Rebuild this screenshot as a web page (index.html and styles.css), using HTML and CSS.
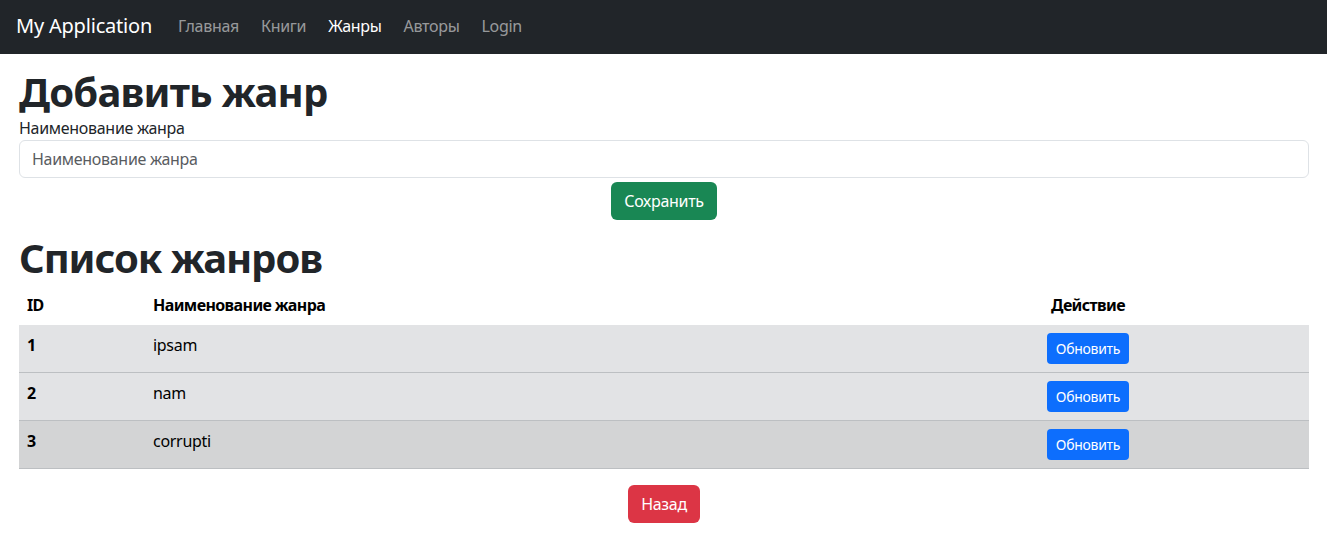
FILE: index.html
```html
<!DOCTYPE html>
<html lang="ru">
<head>
<meta charset="utf-8">
<title>My Application</title>
<link rel="stylesheet" href="styles.css">
</head>
<body>
<nav class="navbar">
  <a class="brand" href="#">My Application</a>
  <ul class="nav">
    <li><a class="nav-link" href="#">Главная</a></li>
    <li><a class="nav-link" href="#">Книги</a></li>
    <li><a class="nav-link active" href="#">Жанры</a></li>
    <li><a class="nav-link" href="#">Авторы</a></li>
    <li><a class="nav-link" href="#">Login</a></li>
  </ul>
</nav>
<main class="content">
  <h1 class="title">Добавить жанр</h1>
  <form class="form">
    <label class="label" for="name">Наименование жанра</label>
    <input class="input" id="name" type="text" placeholder="Наименование жанра">
    <div class="center">
      <button type="button" class="btn btn-success">Сохранить</button>
    </div>
  </form>
  <h1 class="title title-list">Список жанров</h1>
  <table class="table">
    <thead>
      <tr>
        <th class="col-id">ID</th>
        <th class="col-name">Наименование жанра</th>
        <th class="col-action">Действие</th>
        <th></th>
      </tr>
    </thead>
    <tbody>
      <tr>
        <th class="col-id">1</th>
        <td>ipsam</td>
        <td class="col-action"><button type="button" class="btn btn-sm btn-primary">Обновить</button></td>
        <td></td>
      </tr>
      <tr>
        <th class="col-id">2</th>
        <td>nam</td>
        <td class="col-action"><button type="button" class="btn btn-sm btn-primary">Обновить</button></td>
        <td></td>
      </tr>
      <tr class="row-dark">
        <th class="col-id">3</th>
        <td>corrupti</td>
        <td class="col-action"><button type="button" class="btn btn-sm btn-primary">Обновить</button></td>
        <td></td>
      </tr>
    </tbody>
  </table>
  <div class="center center-back">
    <button type="button" class="btn btn-danger">Назад</button>
  </div>
</main>
</body>
</html>
```
FILE: styles.css
```css
* { box-sizing: border-box; }
html, body { margin: 0; padding: 0; }
body {
  font-family: "Noto Sans", "Open Sans", sans-serif;
  font-size: 16px;
  line-height: 1.5;
  letter-spacing: -0.3px;
  color: #212529;
  background: #fff;
}
.navbar {
  height: 54px;
  background: #212529;
  display: flex;
  align-items: center;
  padding: 0 16px 2px;
}
.brand {
  color: #fff;
  text-decoration: none;
  font-size: 20px;
  letter-spacing: -0.2px;
  margin-right: 18px;
}
.nav {
  list-style: none;
  display: flex;
  gap: 6px;
  margin: 0;
  padding: 0;
}
.nav-link {
  display: block;
  padding: 8px;
  color: rgba(255,255,255,0.55);
  text-decoration: none;
}
.nav-link.active { color: #fff; }
.content { padding: 14px 18px 0 19px; }
.title {
  font-size: 40px;
  font-weight: 700;
  line-height: 1.2;
  letter-spacing: -0.8px;
  margin: 0;
}
.form { display: flex; flex-direction: column; }
.label { display: block; line-height: 24px; }
.input {
  display: block;
  width: 100%;
  height: 38px;
  padding: 6px 12px;
  font: inherit;
  letter-spacing: inherit;
  color: #212529;
  border: 1px solid #dee2e6;
  border-radius: 6px;
  background: #fff;
}
.input::placeholder { color: #595c5f; }
.center { display: flex; justify-content: center; margin-top: 4px; }
.btn {
  font: inherit;
  letter-spacing: inherit;
  border: 1px solid transparent;
  border-radius: 6px;
  padding: 6px 12px;
  line-height: 24px;
  color: #fff;
  cursor: pointer;
}
.btn-success { background: #198754; }
.btn-danger { background: #dc3545; }
.btn-primary { background: #0d6efd; }
.btn-sm { font-size: 14px; line-height: 21px; padding: 4px 8px; border-radius: 4px; }
.title-list { margin-top: 14px; letter-spacing: -1.1px; }
.table {
  width: 100%;
  border-collapse: collapse;
  margin-top: 3px;
  color: #000;
}
.table th, .table td {
  padding: 8px;
  text-align: left;
  vertical-align: top;
  line-height: 24px;
}
.table th { letter-spacing: -0.6px; }
.table tbody tr { background: #e2e3e5; border-bottom: 1px solid #bcbfc2; }
.table tbody tr.row-dark { background: #d3d4d5; }
.col-id { width: 126px; }
.col-name { width: 893px; }
.table .col-action { width: 100px; text-align: center; }
.center-back { margin-top: 16px; }
```
